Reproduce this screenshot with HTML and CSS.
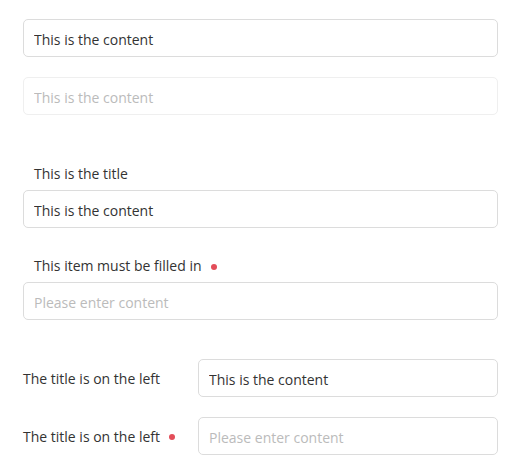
FILE: index.html
```html
<!DOCTYPE html>
<html lang="en">
<head>
<meta charset="utf-8">
<link rel="stylesheet" href="styles.css">
</head>
<body>
<div class="page">
  <div class="group group-plain">
    <input class="field" type="text" value="This is the content">
    <input class="field" type="text" value="This is the content" disabled>
  </div>
  <div class="group group-top">
    <div class="item">
      <label class="label">This is the title</label>
      <input class="field" type="text" value="This is the content">
    </div>
    <div class="item">
      <label class="label">This item must be filled in<span class="dot"></span></label>
      <input class="field" type="text" placeholder="Please enter content">
    </div>
  </div>
  <div class="group group-left">
    <div class="row">
      <label class="label-left">The title is on the left</label>
      <input class="field" type="text" value="This is the content">
    </div>
    <div class="row">
      <label class="label-left">The title is on the left<span class="dot"></span></label>
      <input class="field" type="text" placeholder="Please enter content">
    </div>
  </div>
</div>
</body>
</html>
```

FILE: styles.css
```css
* { box-sizing: border-box; }
html, body { margin: 0; padding: 0; background: #fff; }
body {
  font-family: "Open Sans", "Noto Sans", sans-serif;
  font-size: 14px;
  color: #333;
}
.page {
  padding: 19px 23px 0 23px;
  display: flex;
  flex-direction: column;
}
.group { display: flex; flex-direction: column; }
.group-plain { gap: 20px; }
.group-top { margin-top: 49px; gap: 28px; }
.group-left { margin-top: 39px; gap: 20px; }
.item { display: flex; flex-direction: column; }
.field {
  display: block;
  width: 100%;
  height: 38px;
  margin: 0;
  padding: 2px 10px 0 10px;
  border: 1px solid #dcdcdc;
  border-radius: 5px;
  font-family: inherit;
  font-size: inherit;
  color: #333;
  background: #fff;
  outline: none;
}
.field::placeholder { color: #bbb; }
.field:disabled {
  border-color: #efefef;
  color: #bbb;
  background: #fff;
}
.label {
  display: flex;
  align-items: center;
  height: 20px;
  line-height: 20px;
  margin: 0 0 6px 11px;
}
.dot {
  display: inline-block;
  width: 6px;
  height: 6px;
  border-radius: 50%;
  background: #e34d59;
  margin-left: 9px;
  margin-top: 2px;
}
.row {
  display: flex;
  align-items: center;
}
.label-left {
  flex: 0 0 175px;
  display: flex;
  align-items: center;
}
.row .field { flex: 1; width: auto; min-width: 0; }
```
